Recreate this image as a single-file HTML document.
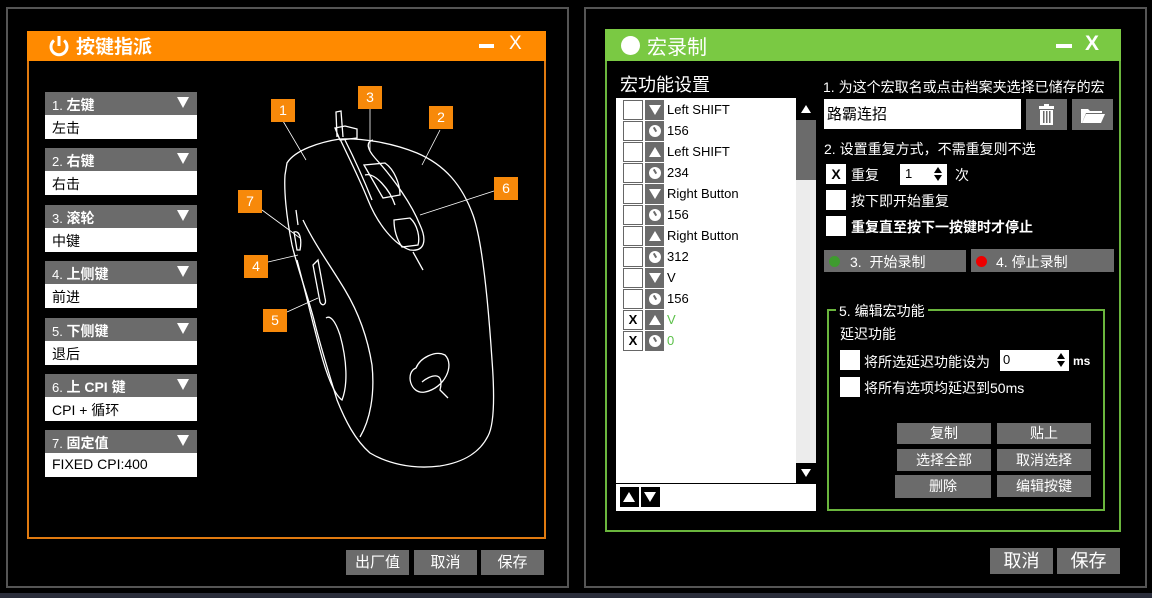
<!DOCTYPE html>
<html><head><meta charset="utf-8"><style>
*{margin:0;padding:0;box-sizing:border-box}
body{width:1152px;height:598px;background:#000;position:relative;overflow:hidden;font-family:"Liberation Sans","Noto Sans CJK SC",sans-serif;color:#fff}
.a{position:absolute}
.gbtn{position:absolute;background:#6b6b6b;color:#fff;text-align:center;font-size:15px}
.dd{position:absolute;left:45px;width:152px}
.dd .h{height:23px;background:#6b6b6b;font-size:13px;padding:3px 0 0 7px;position:relative}
.dd .h b{font-size:14px}
.dd .h i{position:absolute;right:8px;top:5px;width:0;height:0;border-left:6px solid transparent;border-right:6px solid transparent;border-top:11px solid #fff}
.dd .v{height:24px;background:#fff;color:#000;font-size:14px;padding:3px 0 0 7px}
.lab{position:absolute;width:24px;height:23px;background:#f7890a;color:#fff;font-size:14px;text-align:center;line-height:23px}
.row{position:absolute;left:623px;height:20px;width:170px}
.row .c{position:absolute;left:0;top:0;width:20px;height:20px;border:1px solid #666;background:#fff;color:#000;font-weight:bold;font-size:13px;text-align:center;line-height:18px}
.row .ic{position:absolute;left:22px;top:0;width:19px;height:20px;background:#6b6b6b}
.row .t{position:absolute;left:44px;top:2px;font-size:13px;color:#000}
.up{position:absolute;left:4px;top:5px;border-left:6px solid transparent;border-right:6px solid transparent;border-bottom:10px solid #fff}
.dn{position:absolute;left:4px;top:5px;border-left:6px solid transparent;border-right:6px solid transparent;border-top:10px solid #fff}
.clk{position:absolute;left:4px;top:4px;width:12px;height:12px;border-radius:50%;background:#fff}
.clk:after{content:"";position:absolute;left:5px;top:2px;width:2px;height:5px;background:#6b6b6b;transform:rotate(-30deg)}
.cb{position:absolute;width:20px;height:20px;background:#fff;color:#000;font-weight:bold;font-size:14px;text-align:center;line-height:20px}
.txt{position:absolute;font-size:14px;color:#fff;white-space:nowrap}
</style></head><body>
<!-- left window -->
<div class="a" style="left:6px;top:7px;width:563px;height:581px;border:2px solid #555"></div>
<div class="a" style="left:27px;top:31px;width:519px;height:508px;border:2px solid #e07a10"></div>
<div class="a" style="left:27px;top:31px;width:519px;height:30px;background:#ff8a00"></div>
<svg class="a" style="left:47px;top:34px" width="24" height="24" viewBox="0 0 24 24"><path d="M7 6.5A8 8 0 1 0 17 6.5" fill="none" stroke="#fff" stroke-width="3"/><line x1="12" y1="2" x2="12" y2="12" stroke="#fff" stroke-width="3"/></svg>
<div class="txt" style="left:76px;top:32px;font-size:19px;font-weight:bold">按键指派</div>
<div class="a" style="left:479px;top:44px;width:15px;height:4px;background:#fff"></div>
<div class="txt" style="left:509px;top:33px;font-size:19px">X</div>

<div class="dd" style="top:92px"><div class="h">1. <b>左键</b><i></i></div><div class="v">左击</div></div>
<div class="dd" style="top:148px"><div class="h">2. <b>右键</b><i></i></div><div class="v">右击</div></div>
<div class="dd" style="top:205px"><div class="h">3. <b>滚轮</b><i></i></div><div class="v">中键</div></div>
<div class="dd" style="top:261px"><div class="h">4. <b>上侧键</b><i></i></div><div class="v">前进</div></div>
<div class="dd" style="top:318px"><div class="h">5. <b>下侧键</b><i></i></div><div class="v">退后</div></div>
<div class="dd" style="top:374px"><div class="h">6. <b>上 CPI 键</b><i></i></div><div class="v">CPI + 循环</div></div>
<div class="dd" style="top:430px"><div class="h">7. <b>固定值</b><i></i></div><div class="v">FIXED CPI:400</div></div>

<svg class="a" style="left:0;top:0" width="580" height="598" fill="none" stroke="#fff" stroke-width="1.3">
<path d="M287 163 C295 150 320 142 340 139 C360 138 390 142 417 153 C445 165 462 185 473 215 C482 240 488 300 492 360 C495 400 494 425 488 436 C480 452 465 462 440 466 C410 470 385 462 370 453 C355 440 345 420 337 400 C328 370 320 345 314 320 C306 290 298 270 292 245 C286 215 284 190 285 175 Z"/>
<path d="M303 220 C315 245 330 265 345 290 C360 315 368 340 372 365 C375 395 370 420 360 437"/>
<path d="M297 260 C305 290 312 320 320 350 C328 380 335 395 342 400 C348 385 347 360 340 335 C335 320 330 315 326 318"/>
<path d="M340 139 C350 160 360 180 368 200 C378 225 395 245 410 250 C425 252 427 240 420 225 C412 205 395 180 375 158 C368 150 365 142 373 140"/>
<path d="M345 140 C355 160 364 180 372 200 M365 175 C375 172 390 190 395 205"/>
<path d="M364 165 L385 163 C395 170 400 185 400 195 L383 198 Z"/>
<path d="M394 220 L410 218 C418 225 420 238 418 245 L402 247 C396 238 394 228 394 220 Z"/>
<path d="M413 252 L423 270"/>
<path d="M337 137 L336 112 L341 111 L343 137 M335 128 L345 126 L357 129 L357 138 L340 140 Z"/>
<path d="M294 232 C300 230 302 240 300 250 L297 250 Z M296 210 L298 225"/>
<path d="M318 260 L325 298 C327 305 322 307 320 302 L313 265 Z"/>
<path d="M416 368 C405 372 410 395 425 392 C445 388 455 365 445 355 C435 350 420 358 416 368 Z M422 382 C430 375 445 370 440 390 L448 398"/>
<path d="M283 121 L306 160 M370 109 L370 150 M440 130 L422 165 M494 191 L420 215 M262 210 L300 238 M268 262 L298 255 M287 312 L318 298" stroke-width="0.8"/>
</svg>
<div class="lab" style="left:271px;top:99px">1</div>
<div class="lab" style="left:358px;top:86px">3</div>
<div class="lab" style="left:429px;top:106px">2</div>
<div class="lab" style="left:494px;top:177px">6</div>
<div class="lab" style="left:238px;top:190px">7</div>
<div class="lab" style="left:244px;top:255px">4</div>
<div class="lab" style="left:263px;top:309px">5</div>

<div class="gbtn" style="left:346px;top:550px;width:63px;height:25px;line-height:25px">出厂值</div>
<div class="gbtn" style="left:414px;top:550px;width:63px;height:25px;line-height:25px">取消</div>
<div class="gbtn" style="left:481px;top:550px;width:63px;height:25px;line-height:25px">保存</div>

<!-- right window -->
<div class="a" style="left:584px;top:7px;width:563px;height:581px;border:2px solid #555"></div>
<div class="a" style="left:605px;top:29px;width:516px;height:503px;border:2px solid #6ab53d"></div>
<div class="a" style="left:605px;top:29px;width:516px;height:32px;background:#7ac943"></div>
<div class="a" style="left:621px;top:36px;width:19px;height:19px;border-radius:50%;background:#fff"></div>
<div class="txt" style="left:647px;top:31px;font-size:20px">宏录制</div>
<div class="a" style="left:1056px;top:44px;width:16px;height:4px;background:#fff"></div>
<div class="txt" style="left:1085px;top:32px;font-size:21px;font-weight:bold">X</div>

<div class="txt" style="left:620px;top:71px;font-size:18px">宏功能设置</div>
<div class="a" style="left:616px;top:98px;width:200px;height:385px;background:#fff"></div>
<div class="a" style="left:796px;top:98px;width:20px;height:385px;background:#ececec"></div>
<div class="a" style="left:796px;top:98px;width:20px;height:22px;background:#000"><div class="up" style="left:5px;top:7px;border-width:0 5px 8px 5px"></div></div>
<div class="a" style="left:796px;top:120px;width:20px;height:60px;background:#6b6b6b"></div>
<div class="a" style="left:796px;top:463px;width:20px;height:20px;background:#000"><div class="dn" style="left:5px;top:6px;border-width:8px 5px 0 5px"></div></div>
<div class="a" style="left:616px;top:484px;width:200px;height:27px;background:#fff"></div>
<div class="a" style="left:620px;top:487px;width:19px;height:20px;background:#000"><div class="up" style="left:3px"></div></div>
<div class="a" style="left:641px;top:487px;width:19px;height:20px;background:#000"><div class="dn" style="left:3px"></div></div>

<div class="row" style="top:100px"><div class="c"></div><div class="ic"><div class="dn" style="left:4px;top:5px"></div></div><div class="t">Left SHIFT</div></div>
<div class="row" style="top:121px"><div class="c"></div><div class="ic"><div class="clk"></div></div><div class="t">156</div></div>
<div class="row" style="top:142px"><div class="c"></div><div class="ic"><div class="up"></div></div><div class="t">Left SHIFT</div></div>
<div class="row" style="top:163px"><div class="c"></div><div class="ic"><div class="clk"></div></div><div class="t">234</div></div>
<div class="row" style="top:184px"><div class="c"></div><div class="ic"><div class="dn"></div></div><div class="t">Right Button</div></div>
<div class="row" style="top:205px"><div class="c"></div><div class="ic"><div class="clk"></div></div><div class="t">156</div></div>
<div class="row" style="top:226px"><div class="c"></div><div class="ic"><div class="up"></div></div><div class="t">Right Button</div></div>
<div class="row" style="top:247px"><div class="c"></div><div class="ic"><div class="clk"></div></div><div class="t">312</div></div>
<div class="row" style="top:268px"><div class="c"></div><div class="ic"><div class="dn"></div></div><div class="t">V</div></div>
<div class="row" style="top:289px"><div class="c"></div><div class="ic"><div class="clk"></div></div><div class="t">156</div></div>
<div class="row" style="top:310px"><div class="c">X</div><div class="ic"><div class="up"></div></div><div class="t" style="color:#5cc14a">V</div></div>
<div class="row" style="top:331px"><div class="c">X</div><div class="ic"><div class="clk"></div></div><div class="t" style="color:#5cc14a">0</div></div>

<div class="txt" style="left:823px;top:77px">1. 为这个宏取名或点击档案夹选择已储存的宏</div>
<div class="a" style="left:824px;top:99px;width:197px;height:30px;background:#fff;color:#000;font-size:15px;padding:4px 0 0 3px">路霸连招</div>
<div class="gbtn" style="left:1026px;top:99px;width:41px;height:31px">
<svg width="41" height="31" viewBox="0 0 41 31"><rect x="13" y="7" width="15" height="3" fill="#fff"/><rect x="18" y="5" width="5" height="2" fill="#fff"/><rect x="14" y="11" width="13" height="15" fill="#fff"/><rect x="17" y="12" width="1.5" height="12" fill="#6b6b6b"/><rect x="20" y="12" width="1.5" height="12" fill="#6b6b6b"/><rect x="23" y="12" width="1.5" height="12" fill="#6b6b6b"/></svg></div>
<div class="gbtn" style="left:1072px;top:99px;width:41px;height:31px">
<svg width="41" height="31" viewBox="0 0 41 31"><path d="M9 10 L16 10 L18 12 L30 12 L30 14 L14 14 L10 24 L9 24 Z" fill="#fff"/><path d="M14 15 L33 15 L29 24 L10 24 Z" fill="#fff"/></svg></div>
<div class="txt" style="left:824px;top:139px">2. 设置重复方式，不需重复则不选</div>
<div class="cb" style="left:826px;top:164px">X</div>
<div class="txt" style="left:851px;top:165px">重复</div>
<div class="a" style="left:900px;top:164px;width:47px;height:21px;background:#fff;color:#000;font-size:13px;padding:2px 0 0 5px">1</div>
<div class="a" style="left:934px;top:167px;border-left:4px solid transparent;border-right:4px solid transparent;border-bottom:6px solid #000"></div>
<div class="a" style="left:934px;top:175px;border-left:4px solid transparent;border-right:4px solid transparent;border-top:6px solid #000"></div>
<div class="txt" style="left:955px;top:165px">次</div>
<div class="cb" style="left:826px;top:190px"></div>
<div class="txt" style="left:851px;top:191px">按下即开始重复</div>
<div class="cb" style="left:826px;top:216px"></div>
<div class="txt" style="left:851px;top:217px;font-weight:bold">重复直至按下一按键时才停止</div>
<div class="gbtn" style="left:824px;top:250px;width:142px;height:22px;text-align:left;padding:2px 0 0 26px;font-size:14px">3.&nbsp; 开始录制</div>
<div class="a" style="left:829px;top:256px;width:11px;height:11px;border-radius:50%;background:#3f9b2f"></div>
<div class="gbtn" style="left:971px;top:249px;width:143px;height:23px;text-align:left;padding:3px 0 0 25px;font-size:14px">4. 停止录制</div>
<div class="a" style="left:976px;top:256px;width:11px;height:11px;border-radius:50%;background:#e00"></div>

<div class="a" style="left:827px;top:309px;width:278px;height:202px;border:2px solid #6ab53d"></div>
<div class="txt" style="left:836px;top:301px;background:#000;padding:0 3px;font-size:14px">5. 编辑宏功能</div>
<div class="txt" style="left:840px;top:324px">延迟功能</div>
<div class="cb" style="left:840px;top:350px"></div>
<div class="txt" style="left:864px;top:352px">将所选延迟功能设为</div>
<div class="a" style="left:1000px;top:350px;width:69px;height:21px;background:#fff;color:#000;font-size:13px;padding:2px 0 0 3px">0</div>
<div class="a" style="left:1057px;top:353px;border-left:4px solid transparent;border-right:4px solid transparent;border-bottom:6px solid #000"></div>
<div class="a" style="left:1057px;top:361px;border-left:4px solid transparent;border-right:4px solid transparent;border-top:6px solid #000"></div>
<div class="txt" style="left:1073px;top:354px;font-size:12px;font-weight:bold">ms</div>
<div class="cb" style="left:840px;top:377px"></div>
<div class="txt" style="left:864px;top:378px">将所有选项均延迟到50ms</div>
<div class="gbtn" style="left:897px;top:423px;width:94px;height:21px;line-height:21px;font-size:14px">复制</div>
<div class="gbtn" style="left:997px;top:423px;width:94px;height:21px;line-height:21px;font-size:14px">贴上</div>
<div class="gbtn" style="left:897px;top:449px;width:94px;height:22px;line-height:22px;font-size:14px">选择全部</div>
<div class="gbtn" style="left:997px;top:449px;width:94px;height:22px;line-height:22px;font-size:14px">取消选择</div>
<div class="gbtn" style="left:895px;top:475px;width:96px;height:23px;line-height:23px;font-size:14px">删除</div>
<div class="gbtn" style="left:997px;top:475px;width:94px;height:22px;line-height:22px;font-size:14px">编辑按键</div>

<div class="gbtn" style="left:990px;top:548px;width:63px;height:26px;line-height:26px;font-size:18px">取消</div>
<div class="gbtn" style="left:1057px;top:548px;width:63px;height:26px;line-height:26px;font-size:18px">保存</div>
<div class="a" style="left:0;top:593px;width:1152px;height:5px;background:#2a2d3a"></div>
</body></html>
